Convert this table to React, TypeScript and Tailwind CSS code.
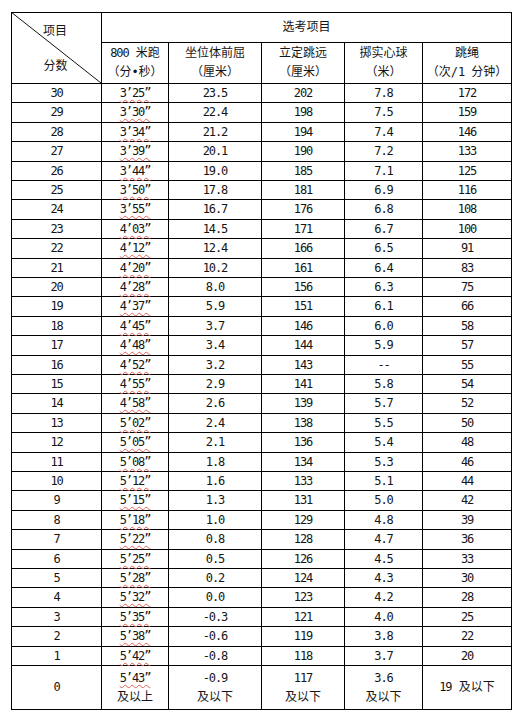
import React from "react";

type Row = [string, string, string, string, string, string];

const rows: Row[] = [
  ["30", "3’25”", "23.5", "202", "7.8", "172"],
  ["29", "3’30”", "22.4", "198", "7.5", "159"],
  ["28", "3’34”", "21.2", "194", "7.4", "146"],
  ["27", "3’39”", "20.1", "190", "7.2", "133"],
  ["26", "3’44”", "19.0", "185", "7.1", "125"],
  ["25", "3’50”", "17.8", "181", "6.9", "116"],
  ["24", "3’55”", "16.7", "176", "6.8", "108"],
  ["23", "4’03”", "14.5", "171", "6.7", "100"],
  ["22", "4’12”", "12.4", "166", "6.5", "91"],
  ["21", "4’20”", "10.2", "161", "6.4", "83"],
  ["20", "4’28”", "8.0", "156", "6.3", "75"],
  ["19", "4’37”", "5.9", "151", "6.1", "66"],
  ["18", "4’45”", "3.7", "146", "6.0", "58"],
  ["17", "4’48”", "3.4", "144", "5.9", "57"],
  ["16", "4’52”", "3.2", "143", "--", "55"],
  ["15", "4’55”", "2.9", "141", "5.8", "54"],
  ["14", "4’58”", "2.6", "139", "5.7", "52"],
  ["13", "5’02”", "2.4", "138", "5.5", "50"],
  ["12", "5’05”", "2.1", "136", "5.4", "48"],
  ["11", "5’08”", "1.8", "134", "5.3", "46"],
  ["10", "5’12”", "1.6", "133", "5.1", "44"],
  ["9", "5’15”", "1.3", "131", "5.0", "42"],
  ["8", "5’18”", "1.0", "129", "4.8", "39"],
  ["7", "5’22”", "0.8", "128", "4.7", "36"],
  ["6", "5’25”", "0.5", "126", "4.5", "33"],
  ["5", "5’28”", "0.2", "124", "4.3", "30"],
  ["4", "5’32”", "0.0", "123", "4.2", "28"],
  ["3", "5’35”", "-0.3", "121", "4.0", "25"],
  ["2", "5’38”", "-0.6", "119", "3.8", "22"],
  ["1", "5’42”", "-0.8", "118", "3.7", "20"],
];

const cell = "bg-white flex flex-col items-center justify-center text-center";
const wavy =
  "underline decoration-wavy decoration-[#e0605a] decoration-[1px] underline-offset-[2px]";
const num = "tracking-[-1.1px]";

export default function App() {
  return (
    <div className="min-h-screen bg-white">
      <div className="ml-[11px] pt-[12px] w-fit">
        <div className="grid w-fit grid-cols-[89px_66px_92px_82px_77px_88px] gap-px bg-black p-px text-[12px] leading-[19px] text-[#151515] font-['DejaVu_Sans_Mono','Noto_Sans_CJK_SC',monospace]">
          {/* diagonal header */}
          <div className={`${cell} row-span-2 relative justify-between! pt-[9px] pb-[7px]`}>
            <svg
              className="absolute inset-0 h-full w-full"
              preserveAspectRatio="none"
              viewBox="0 0 89 70"
            >
              <line x1="-1" y1="-1" x2="89" y2="70" stroke="#111" strokeWidth="1" />
            </svg>
            <span className="relative pr-[3px]">项目</span>
            <span className="relative pr-[2px]">分数</span>
          </div>
          <div className={`${cell} col-span-5 h-[29px]`}>
            <span>选考项目</span>
          </div>
          <div className={`${cell} h-[40px]`}>
            <span>
              <span className={num}>800</span> 米跑
            </span>
            <span>（分•秒）</span>
          </div>
          <div className={`${cell} h-[40px]`}>
            <span>坐位体前屈</span>
            <span>（厘米）</span>
          </div>
          <div className={`${cell} h-[40px]`}>
            <span>立定跳远</span>
            <span>（厘米）</span>
          </div>
          <div className={`${cell} h-[40px]`}>
            <span>掷实心球</span>
            <span>（米）</span>
          </div>
          <div className={`${cell} h-[40px]`}>
            <span>跳绳</span>
            <span>
              （次/<span className={num}>1</span> 分钟）
            </span>
          </div>

          {rows.map((r, i) => {
            const h = i % 5 === 1 || i % 5 === 3 ? "h-[19px]" : "h-[18px]";
            return (
              <React.Fragment key={r[0]}>
                <div className={`${cell} ${h}`}>
                  <span className={num}>{r[0]}</span>
                </div>
                <div className={`${cell} ${h}`}>
                  <span className={`${num} ${wavy}`}>{r[1]}</span>
                </div>
                <div className={`${cell} ${h}`}>
                  <span className={num}>{r[2]}</span>
                </div>
                <div className={`${cell} ${h}`}>
                  <span className={num}>{r[3]}</span>
                </div>
                <div className={`${cell} ${h}`}>
                  <span className={num}>{r[4]}</span>
                </div>
                <div className={`${cell} ${h}`}>
                  <span className={num}>{r[5]}</span>
                </div>
              </React.Fragment>
            );
          })}

          <div className={`${cell} h-[43px]`}>
            <span className={num}>0</span>
          </div>
          <div className={`${cell} h-[43px]`}>
            <span className={`${num} ${wavy}`}>5’43”</span>
            <span>及以上</span>
          </div>
          <div className={`${cell} h-[43px]`}>
            <span className={num}>-0.9</span>
            <span>及以下</span>
          </div>
          <div className={`${cell} h-[43px]`}>
            <span className={num}>117</span>
            <span>及以下</span>
          </div>
          <div className={`${cell} h-[43px]`}>
            <span className={num}>3.6</span>
            <span>及以下</span>
          </div>
          <div className={`${cell} h-[43px]`}>
            <span>
              <span className={num}>19</span> 及以下
            </span>
          </div>
        </div>
      </div>
    </div>
  );
}
